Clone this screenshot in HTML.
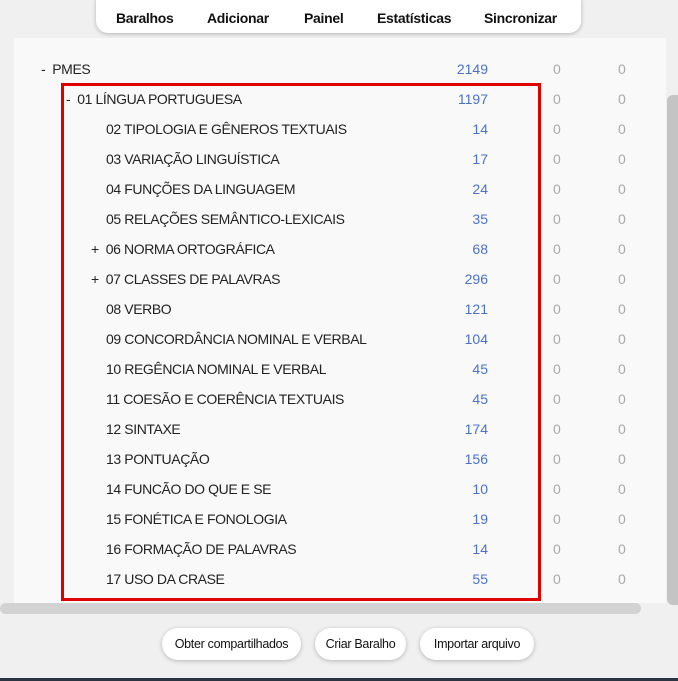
<html><head><style>
body{margin:0;width:678px;height:681px;background:#f0f0f0;position:relative;overflow:hidden;font-family:"Liberation Sans",sans-serif;}
.nav{position:absolute;left:96px;top:-10px;width:485px;height:43px;background:#fff;border-radius:12px;box-shadow:0 1px 4px rgba(0,0,0,.25);}
.nav span{position:absolute;top:20px;font-weight:bold;font-size:14px;color:#111;letter-spacing:-0.3px}
.panel{position:absolute;left:14px;top:38px;width:652px;height:565px;background:#f9f9f9;}
.row{position:absolute;height:30px;line-height:30px;font-size:14px;color:#222;letter-spacing:-0.4px;white-space:nowrap}
.n{position:absolute;width:80px;text-align:right;left:408px;color:#4a72c8;font-size:14px;height:30px;line-height:30px}
.z{position:absolute;color:#aaa;font-size:14px;height:30px;line-height:30px}
.box{position:absolute;left:61px;top:83px;width:474px;height:512px;border:3px solid #e00000;}
.hs{position:absolute;left:0;top:603px;width:641px;height:11px;background:#d3d3d3;border-radius:6px}
.vs{position:absolute;left:667px;top:95px;width:11px;height:510px;background:#c4c4c4;border-radius:6px 0 0 6px}
.btn{position:absolute;top:628px;height:32px;line-height:32px;background:#fff;border-radius:16px;box-shadow:0 1px 4px rgba(0,0,0,.25);font-size:12.5px;color:#111;text-align:center;letter-spacing:-0.3px}
</style></head><body>
<div class="panel"></div>
<div class="nav"><span style="left:20px">Baralhos</span><span style="left:111px">Adicionar</span><span style="left:208px">Painel</span><span style="left:281px">Estatísticas</span><span style="left:388px">Sincronizar</span></div>
<div id="rows"></div>
<div class="row" style="left:41px;top:54px">-&nbsp;&nbsp;PMES</div><div class="n" style="top:54px">2149</div>
<div class="row" style="left:66px;top:84px">-&nbsp;&nbsp;01 LÍNGUA PORTUGUESA</div><div class="n" style="top:84px">1197</div>
<div class="row" style="left:106px;top:114px">02 TIPOLOGIA E GÊNEROS TEXTUAIS</div><div class="n" style="top:114px">14</div>
<div class="row" style="left:106px;top:144px">03 VARIAÇÃO LINGUÍSTICA</div><div class="n" style="top:144px">17</div>
<div class="row" style="left:106px;top:174px">04 FUNÇÕES DA LINGUAGEM</div><div class="n" style="top:174px">24</div>
<div class="row" style="left:106px;top:204px">05 RELAÇÕES SEMÂNTICO-LEXICAIS</div><div class="n" style="top:204px">35</div>
<div class="row" style="left:91px;top:234px">+&nbsp;&nbsp;06 NORMA ORTOGRÁFICA</div><div class="n" style="top:234px">68</div>
<div class="row" style="left:91px;top:264px">+&nbsp;&nbsp;07 CLASSES DE PALAVRAS</div><div class="n" style="top:264px">296</div>
<div class="row" style="left:106px;top:294px">08 VERBO</div><div class="n" style="top:294px">121</div>
<div class="row" style="left:106px;top:324px">09 CONCORDÂNCIA NOMINAL E VERBAL</div><div class="n" style="top:324px">104</div>
<div class="row" style="left:106px;top:354px">10 REGÊNCIA NOMINAL E VERBAL</div><div class="n" style="top:354px">45</div>
<div class="row" style="left:106px;top:384px">11 COESÃO E COERÊNCIA TEXTUAIS</div><div class="n" style="top:384px">45</div>
<div class="row" style="left:106px;top:414px">12 SINTAXE</div><div class="n" style="top:414px">174</div>
<div class="row" style="left:106px;top:444px">13 PONTUAÇÃO</div><div class="n" style="top:444px">156</div>
<div class="row" style="left:106px;top:474px">14 FUNCÃO DO QUE E SE</div><div class="n" style="top:474px">10</div>
<div class="row" style="left:106px;top:504px">15 FONÉTICA E FONOLOGIA</div><div class="n" style="top:504px">19</div>
<div class="row" style="left:106px;top:534px">16 FORMAÇÃO DE PALAVRAS</div><div class="n" style="top:534px">14</div>
<div class="row" style="left:106px;top:564px">17 USO DA CRASE</div><div class="n" style="top:564px">55</div>
<script></script>
<div id="z"></div>
<style>.z1{left:553px}.z2{left:618px}</style>
<div class="z z1" style="top:54px">0</div><div class="z z2" style="top:54px">0</div>
<div class="z z1" style="top:84px">0</div><div class="z z2" style="top:84px">0</div>
<div class="z z1" style="top:114px">0</div><div class="z z2" style="top:114px">0</div>
<div class="z z1" style="top:144px">0</div><div class="z z2" style="top:144px">0</div>
<div class="z z1" style="top:174px">0</div><div class="z z2" style="top:174px">0</div>
<div class="z z1" style="top:204px">0</div><div class="z z2" style="top:204px">0</div>
<div class="z z1" style="top:234px">0</div><div class="z z2" style="top:234px">0</div>
<div class="z z1" style="top:264px">0</div><div class="z z2" style="top:264px">0</div>
<div class="z z1" style="top:294px">0</div><div class="z z2" style="top:294px">0</div>
<div class="z z1" style="top:324px">0</div><div class="z z2" style="top:324px">0</div>
<div class="z z1" style="top:354px">0</div><div class="z z2" style="top:354px">0</div>
<div class="z z1" style="top:384px">0</div><div class="z z2" style="top:384px">0</div>
<div class="z z1" style="top:414px">0</div><div class="z z2" style="top:414px">0</div>
<div class="z z1" style="top:444px">0</div><div class="z z2" style="top:444px">0</div>
<div class="z z1" style="top:474px">0</div><div class="z z2" style="top:474px">0</div>
<div class="z z1" style="top:504px">0</div><div class="z z2" style="top:504px">0</div>
<div class="z z1" style="top:534px">0</div><div class="z z2" style="top:534px">0</div>
<div class="z z1" style="top:564px">0</div><div class="z z2" style="top:564px">0</div>
<div class="box"></div>
<div class="hs"></div><div class="vs"></div>
<div class="btn" style="left:162px;width:139px">Obter compartilhados</div>
<div class="btn" style="left:315px;width:91px">Criar Baralho</div>
<div class="btn" style="left:420px;width:114px">Importar arquivo</div>
<div style="position:absolute;left:0;top:678px;width:678px;height:3px;background:#2b3440"></div>
</body></html>
